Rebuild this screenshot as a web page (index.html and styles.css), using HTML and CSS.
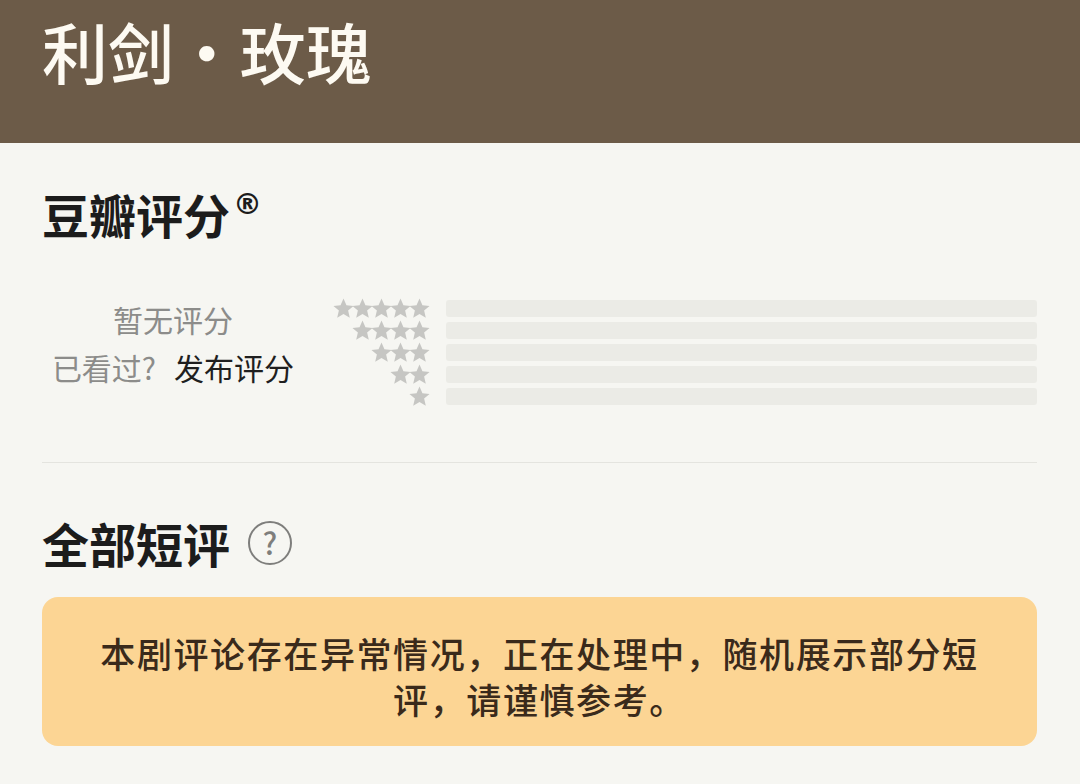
FILE: index.html
```html
<!DOCTYPE html>
<html lang="zh-CN">
<head>
<meta charset="UTF-8">
<meta name="viewport" content="width=device-width, initial-scale=1.0">
<title>利剑 · 玫瑰</title>
<link rel="stylesheet" href="styles.css">
</head>
<body>
<svg width="0" height="0" class="defs" aria-hidden="true">
    <symbol id="star" viewBox="0 0 20 20">
        <polygon points="10,0.5 12.8,7 19.6,7.5 14.4,12 16,18.9 10,15.3 4,18.9 5.6,12 0.4,7.5 7.2,7"/>
    </symbol>
</svg>

<header class="top-bar">
    <h1>利剑 · 玫瑰</h1>
</header>

<main class="content">
    <section class="rating-section">
        <h2>豆瓣评分<sup>®</sup></h2>
        <div class="rating">
            <div class="score">
                <p class="none">暂无评分</p>
                <p class="seen">已看过?<a href="#">发布评分</a></p>
            </div>
            <div class="dist">
                <div class="dist-row">
                    <div class="stars">
                        <svg><use href="#star"/></svg><svg><use href="#star"/></svg><svg><use href="#star"/></svg><svg><use href="#star"/></svg><svg><use href="#star"/></svg>
                    </div>
                    <div class="bar"></div>
                </div>
                <div class="dist-row">
                    <div class="stars">
                        <svg><use href="#star"/></svg><svg><use href="#star"/></svg><svg><use href="#star"/></svg><svg><use href="#star"/></svg>
                    </div>
                    <div class="bar"></div>
                </div>
                <div class="dist-row">
                    <div class="stars">
                        <svg><use href="#star"/></svg><svg><use href="#star"/></svg><svg><use href="#star"/></svg>
                    </div>
                    <div class="bar"></div>
                </div>
                <div class="dist-row">
                    <div class="stars">
                        <svg><use href="#star"/></svg><svg><use href="#star"/></svg>
                    </div>
                    <div class="bar"></div>
                </div>
                <div class="dist-row">
                    <div class="stars">
                        <svg><use href="#star"/></svg>
                    </div>
                    <div class="bar"></div>
                </div>
            </div>
        </div>
    </section>

    <section class="comments">
        <h2>全部短评 <span class="help">?</span></h2>
        <div class="notice">本剧评论存在异常情况，正在处理中，随机展示部分短评，请谨慎参考。</div>
    </section>
</main>
</body>
</html>
```

FILE: styles.css
```css
* { margin: 0; padding: 0; box-sizing: border-box; }
body {
    background: #f6f6f2;
    color: #1c1c1c;
    font-family: 'Noto Sans CJK SC', 'Noto Sans', sans-serif;
    width: 1080px;
    height: 784px;
    overflow: hidden;
}
.defs {
    position: absolute;
}
.top-bar {
    background: #6c5b48;
    height: 143px;
    padding: 11px 42px 0;
}
.top-bar h1 {
    color: #fdfaf2;
    font-size: 66px;
    font-weight: 500;
    line-height: 78px;
    word-spacing: -15px;
}
.content {
    padding: 0 43px 0 42px;
}
h2 {
    font-size: 47px;
    font-weight: 700;
    line-height: 56px;
    display: flex;
    align-items: center;
}
.rating-section {
    padding-top: 43px;
    padding-bottom: 57px;
    border-bottom: 1.5px solid #e4e4df;
}
h2 sup {
    font-family: 'DejaVu Sans', sans-serif;
    font-size: 29px;
    font-weight: 700;
    align-self: flex-start;
    line-height: 36px;
    margin-left: 3px;
}
.rating {
    display: flex;
    margin-top: 53px;
}
.score {
    width: 262px;
    text-align: center;
    font-size: 30px;
    line-height: 48px;
    color: #8c8c8a;
}
.seen a {
    color: #1f1f1f;
    text-decoration: none;
    margin-left: 18px;
}
.dist {
    flex: 1;
    display: flex;
    flex-direction: column;
    gap: 5px;
    padding-top: 5px;
}
.dist-row {
    display: flex;
    align-items: center;
    height: 17px;
}
.stars {
    width: 126px;
    display: flex;
    justify-content: flex-end;
}
.stars svg {
    width: 21px;
    height: 21px;
    margin-left: -2px;
    fill: #c6c6c3;
    flex: none;
}
.bar {
    flex: 1;
    height: 17px;
    margin-left: 16px;
    background: #ebebe6;
    border-radius: 3px;
}
.comments {
    padding-top: 52px;
}
.help {
    width: 44px;
    height: 44px;
    margin-left: 18px;
    border: 2.5px solid #7e7e7c;
    border-radius: 50%;
    color: #7e7e7c;
    font-size: 30px;
    font-weight: 500;
    line-height: 38px;
    text-align: center;
}
.notice {
    margin-top: 26px;
    background: #fcd594;
    border-radius: 16px;
    padding: 33px 52px 24px;
    height: 149px;
    text-align: center;
    color: #3a2a1b;
    font-size: 35px;
    font-weight: 500;
    letter-spacing: 1.6px;
    line-height: 46px;
}
```
